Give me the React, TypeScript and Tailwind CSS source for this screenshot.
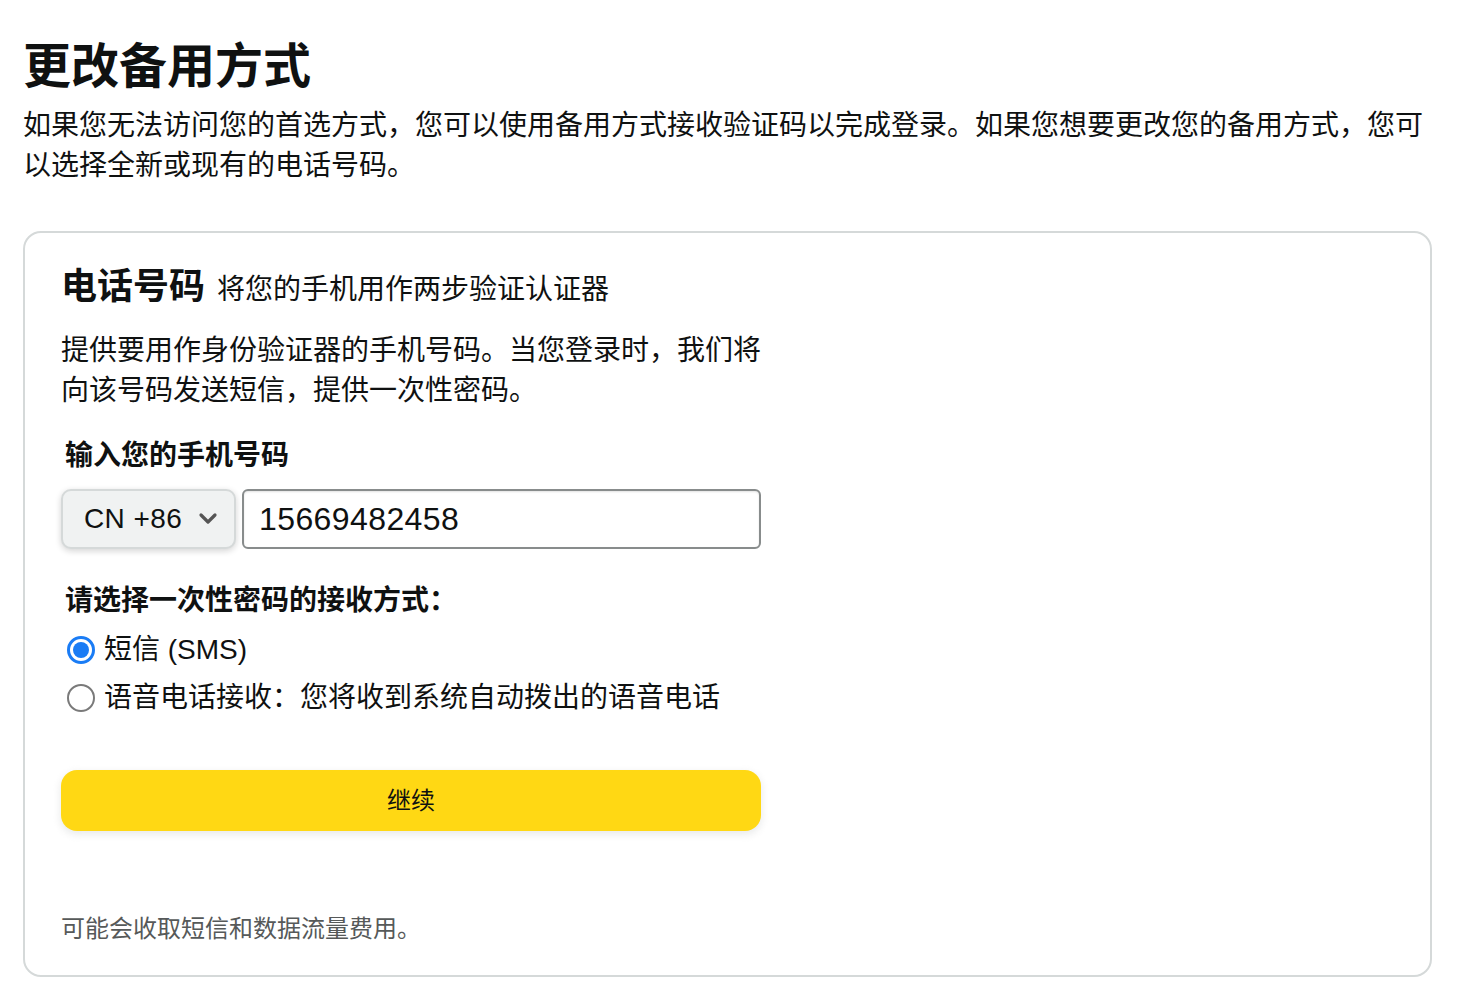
import { useState } from "react";

const FONT = { fontFamily: '"Liberation Sans", Arial, "Noto Sans CJK SC", sans-serif' };

function Radio({ checked, onClick, label }: { checked: boolean; onClick: () => void; label: string }) {
  return (
    <label onClick={onClick} className="flex h-[48px] cursor-pointer items-center gap-[9px] pl-[6px]">
      {checked ? (
        <span className="flex h-[28px] w-[28px] items-center justify-center rounded-full border-[3px] border-[#1a7cf5] bg-white">
          <span className="h-[16px] w-[16px] rounded-full bg-[#1a7cf5]" />
        </span>
      ) : (
        <span className="h-[28px] w-[28px] rounded-full border-2 border-[#7a7a7a] bg-white" />
      )}
      <span className="text-[28px] leading-[48px] text-[#0f1111]">{label}</span>
    </label>
  );
}

export default function App() {
  const [method, setMethod] = useState<"sms" | "voice">("sms");
  const [phone, setPhone] = useState("15669482458");

  return (
    <div style={FONT} className="min-h-screen bg-white pl-[23px] pr-[28px] pt-[38px] text-[#0f1111]">
      <h1 className="text-[48px] font-bold leading-[58px]">更改备用方式</h1>
      <p className="mt-[10px] text-[28px] leading-[40px]">
        如果您无法访问您的首选方式，您可以使用备用方式接收验证码以完成登录。如果您想要更改您的备用方式，您可以选择全新或现有的电话号码。
      </p>

      <div className="mt-[45px] rounded-[18px] border-2 border-[#d5d9d9] px-[36px] pb-[28px] pt-[28px]">
        <div className="flex h-[50px] items-baseline gap-[12px] pt-[2px]">
          <span className="text-[36px] font-bold leading-[48px]">电话号码</span>
          <span className="text-[28px] leading-[48px]">将您的手机用作两步验证认证器</span>
        </div>

        <div className="w-[700px]">
          <p className="mt-[20px] text-[28px] leading-[40px]">
            提供要用作身份验证器的手机号码。当您登录时，我们将向该号码发送短信，提供一次性密码。
          </p>

          <div className="mt-[25px] pl-[4px] text-[28px] font-bold leading-[40px]">输入您的手机号码</div>

          <div className="mt-[13px] flex gap-[6px]">
            <button className="flex h-[60px] w-[175px] items-center justify-between rounded-[10px] border-2 border-[#d5d9d9] bg-[#f0f2f2] pl-[21px] pr-[16px] shadow-[0_2px_6px_rgba(15,17,17,0.18)]">
              <span className="text-[28px] tracking-[0.4px]">CN +86</span>
              <svg width="20" height="14" viewBox="0 0 20 14" fill="none">
                <path d="M3 3l7 7 7-7" stroke="#555" strokeWidth="3.2" strokeLinecap="round" strokeLinejoin="round" />
              </svg>
            </button>
            <input
              value={phone}
              onChange={(e) => setPhone(e.target.value)}
              className="h-[60px] flex-1 rounded-[6px] border-2 border-[#888c8c] px-[15px] text-[32px] tracking-[0.4px] outline-none shadow-[inset_0_1px_2px_rgba(15,17,17,0.12)]"
            />
          </div>

          <div className="mt-[32px] pl-[4px] text-[28px] font-bold leading-[40px]">请选择一次性密码的接收方式：</div>

          <div className="mt-[5px]">
            <Radio checked={method === "sms"} onClick={() => setMethod("sms")} label="短信 (SMS)" />
            <Radio
              checked={method === "voice"}
              onClick={() => setMethod("voice")}
              label="语音电话接收：您将收到系统自动拨出的语音电话"
            />
          </div>

          <button className="mt-[48px] h-[61px] w-full rounded-[16px] bg-[#ffd814] text-[24px] text-[#0f1111] shadow-[0_3px_8px_rgba(213,217,217,0.6)]">
            继续
          </button>
        </div>

        <p className="mt-[80px] text-[24px] leading-[36px] text-[#565959]">可能会收取短信和数据流量费用。</p>
      </div>
    </div>
  );
}
